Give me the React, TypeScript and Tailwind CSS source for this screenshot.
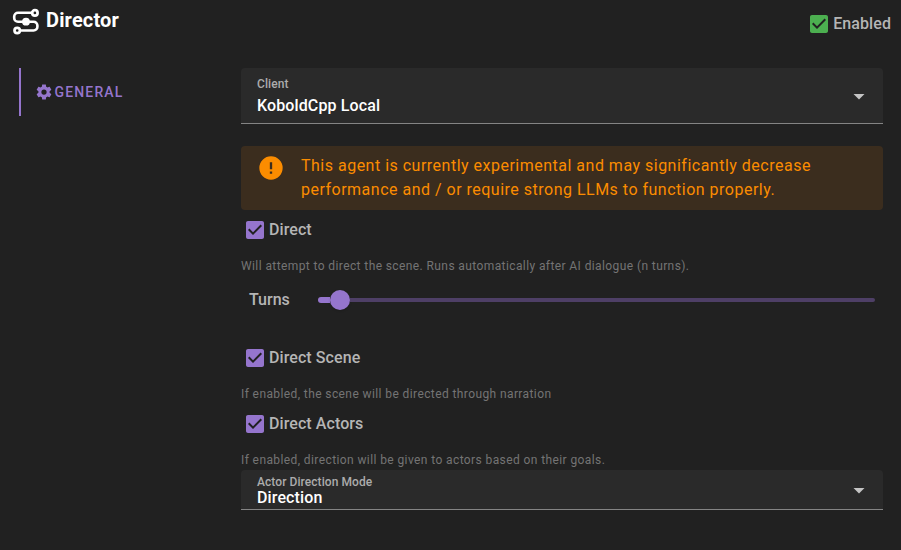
import React from 'react';

const CHECKBOX =
  'M10,17L5,12L6.41,10.58L10,14.17L17.59,6.58L19,8M19,3H5C3.89,3 3,3.89 3,5V19C3,20.1 3.9,21 5,21H19C20.1,21 21,20.1 21,19V5C21,3.89 20.1,3 19,3Z';
const COG =
  'M12,15.5A3.5,3.5 0 0,1 8.5,12A3.5,3.5 0 0,1 12,8.5A3.5,3.5 0 0,1 15.5,12A3.5,3.5 0 0,1 12,15.5M19.43,12.97C19.47,12.65 19.5,12.33 19.5,12C19.5,11.67 19.47,11.34 19.43,11L21.54,9.37C21.73,9.22 21.78,8.95 21.66,8.73L19.66,5.27C19.54,5.05 19.27,4.96 19.05,5.05L16.56,6.05C16.04,5.66 15.5,5.32 14.87,5.07L14.5,2.42C14.46,2.18 14.25,2 14,2H10C9.75,2 9.54,2.18 9.5,2.42L9.13,5.07C8.5,5.32 7.96,5.66 7.44,6.05L4.95,5.05C4.73,4.96 4.46,5.05 4.34,5.27L2.34,8.73C2.21,8.95 2.27,9.22 2.46,9.37L4.57,11C4.53,11.34 4.5,11.67 4.5,12C4.5,12.33 4.53,12.65 4.57,12.97L2.46,14.63C2.27,14.78 2.21,15.05 2.34,15.27L4.34,18.73C4.46,18.95 4.73,19.03 4.95,18.95L7.44,17.94C7.96,18.34 8.5,18.68 9.13,18.93L9.5,21.58C9.54,21.82 9.75,22 10,22H14C14.25,22 14.46,21.82 14.5,21.58L14.87,18.93C15.5,18.67 16.04,18.34 16.56,17.94L19.05,18.95C19.27,19.03 19.54,18.95 19.66,18.73L21.66,15.27C21.78,15.05 21.73,14.78 21.54,14.63L19.43,12.97Z';
const ALERT =
  'M13,13H11V7H13M13,17H11V15H13M12,2A10,10 0 0,0 2,12A10,10 0 0,0 12,22A10,10 0 0,0 22,12A10,10 0 0,0 12,2Z';

function Icon({ path, className }: { path: string; className: string }) {
  return (
    <svg viewBox="0 0 24 24" className={`shrink-0 fill-current ${className}`}>
      <path d={path} />
    </svg>
  );
}

function DirectorIcon() {
  return (
    <svg viewBox="0 0 28 28" className="size-7 shrink-0" fill="none" stroke="currentColor">
      <path
        d="M20 4.8H6a3.8 3.8 0 0 0-3.8 3.8v1.3A3.8 3.8 0 0 0 6 13.7h15.6a3.8 3.8 0 0 1 3.8 3.8v1.2a3.8 3.8 0 0 1-3.8 3.8H8"
        strokeWidth="2.6"
      />
      <circle cx="22.9" cy="4.9" r="2.7" strokeWidth="2.7" />
      <circle cx="5.2" cy="22.5" r="2.7" strokeWidth="2.7" />
      <circle cx="14" cy="13.7" r="3.9" fill="currentColor" stroke="none" />
    </svg>
  );
}

function Check({ label, color = 'text-[#9575cd]' }: { label: string; color?: string }) {
  return (
    <div className="flex h-6 items-center gap-0.5">
      <Icon path={CHECKBOX} className={`size-6 ${color}`} />
      <span className="text-base leading-6 font-medium tracking-[0.08px] text-[#b5b5b5]">{label}</span>
    </div>
  );
}

function Hint({ children }: { children: React.ReactNode }) {
  return <p className="text-xs leading-4 tracking-[0.4px] text-[#747474]">{children}</p>;
}

type SelectProps = { label: string; value: string; box: string; row: string; arrow: string };

function Select({ label, value, box, row, arrow }: SelectProps) {
  return (
    <div className={`flex items-start justify-between rounded-t border-b border-[#848484] bg-[#2a2a2a] pr-[18px] pl-4 ${box}`}>
      <div>
        <div className="text-xs leading-4 font-medium tracking-[0.07px] text-[#acacac]">{label}</div>
        <div className={`text-base font-medium tracking-[0.12px] text-white ${row}`}>{value}</div>
      </div>
      <svg viewBox="0 0 12 6" className={`h-[6px] w-3 fill-[#c4c4c4] ${arrow}`}>
        <path d="M0.5 0h11L6 5.5z" />
      </svg>
    </div>
  );
}

export default function App() {
  return (
    <div className="flex h-[550px] w-[901px] flex-col overflow-hidden bg-[#212121] font-[Roboto,sans-serif]">
      <header className="flex h-[68px] items-start justify-between pr-2.5 pl-3">
        <div className="flex gap-1.5 pt-2 text-white">
          <DirectorIcon />
          <h1 className="-mt-0.5 text-xl leading-7 font-bold tracking-[0.15px]">Director</h1>
        </div>
        <div className="pt-3">
          <Check label="Enabled" color="text-[#4caf50]" />
        </div>
      </header>

      <div className="flex grow">
        <nav className="w-[241px] shrink-0 pl-[19px]">
          <div className="flex h-12 items-center border-l-2 border-[#9575cd] pl-3.5 text-[#9575cd]">
            <Icon path={COG} className="size-[18px]" />
            <span className="pl-[1.5px] text-sm font-medium tracking-[1.15px]">GENERAL</span>
          </div>
        </nav>

        <main className="w-[642px]">
          <Select label="Client" value="KoboldCpp Local" box="h-14 pt-2" row="leading-7" arrow="mt-[18px]" />
          <div className="mt-[22px] flex h-16 rounded bg-[#3b2d1e] pt-2 pl-4 text-[#fb8c00]">
            <Icon path={ALERT} className="-mt-[0.5px] size-7" />
            <p className="pl-4 text-base leading-6 tracking-[0.495px]">
              This agent is currently experimental and may significantly decrease
              <br />
              performance and / or require strong LLMs to function properly.
            </p>
          </div>

          <div className="pt-2 pl-0.5">
            <Check label="Direct" />
          </div>
          <div className="pt-4">
            <Hint>Will attempt to direct the scene. Runs automatically after AI dialogue (n turns).</Hint>
          </div>

          <div className="mt-2.5 flex h-8 items-center px-2">
            <span className="w-[69px] text-base font-medium text-[#b5b5b5]">Turns</span>
            <div className="flex grow items-center">
              <div className="h-1.5 w-3 rounded-l-full bg-[#9575cd]" />
              <div className="size-5 rounded-full bg-[#9575cd] shadow" />
              <div className="h-1 grow rounded-r-sm bg-[#4e3f66]" />
            </div>
          </div>

          <div className="pt-[30px] pl-0.5">
            <Check label="Direct Scene" />
          </div>
          <div className="pt-4">
            <Hint>If enabled, the scene will be directed through narration</Hint>
          </div>
          <div className="pt-2.5 pl-0.5">
            <Check label="Direct Actors" />
          </div>
          <div className="pt-4 pb-0.5">
            <Hint>If enabled, direction will be given to actors based on their goals.</Hint>
          </div>
          <Select label="Actor Direction Mode" value="Direction" box="h-10 pt-1" row="leading-4" arrow="mt-3.5" />
        </main>
      </div>
    </div>
  );
}
